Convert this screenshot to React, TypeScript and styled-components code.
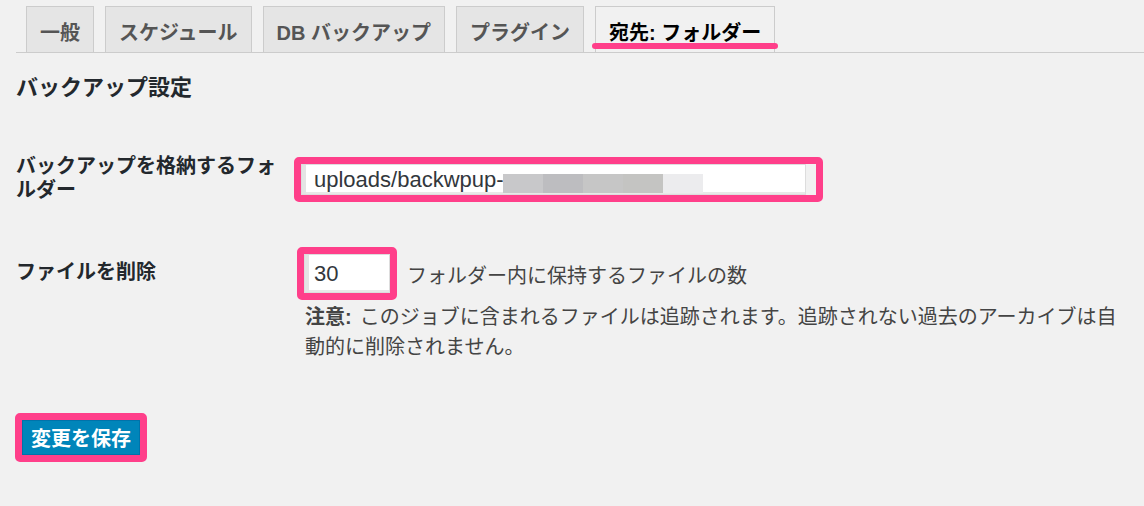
import React from 'react';
import styled, { createGlobalStyle } from 'styled-components';

const PINK = '#ff3f8a';

const tabs = ['一般', 'スケジュール', 'DB バックアップ', 'プラグイン', '宛先: フォルダー'];
const blurBlocks = ['#c8c8ca', '#bdbdc0', '#c6c6c6', '#c4c4c2', '#ececee'];

export default function App() {
  return (
    <>
      <GlobalStyle />
      <Page>
        <TabBar>
          {tabs.map((t, i) => (
            <Tab key={t} $active={i === tabs.length - 1}>
              {t}
              {i === tabs.length - 1 && <Underline />}
            </Tab>
          ))}
        </TabBar>

        <Title>バックアップ設定</Title>

        <FormRow $top={51}>
          <Label $pad={0}>バックアップを格納するフォルダー</Label>
          <Field $pad={3}>
            <Highlight $extra={10}>
              <FieldWrap>
                <TextInput $w={505} $h={31} $indent={12} defaultValue="uploads/backwpup-" />
                <Redaction>
                  {blurBlocks.map((c, i) => (
                    <BlurBlock key={i} $color={c} />
                  ))}
                </Redaction>
              </FieldWrap>
            </Highlight>
          </Field>
        </FormRow>

        <FormRow $top={45}>
          <Label $pad={13}>ファイルを削除</Label>
          <Field $pad={0}>
            <InlineLine>
              <Highlight $extra={0}>
                <TextInput $w={86} $h={39} $indent={9} defaultValue="30" />
              </Highlight>
              <Description>フォルダー内に保持するファイルの数</Description>
            </InlineLine>
            <Note>
              <NoteLabel>注意:</NoteLabel>このジョブに含まれるファイルは追跡されます。追跡されない過去のアーカイブは自動的に削除されません。
            </Note>
          </Field>
        </FormRow>

        <Submit>
          <Highlight $extra={0}>
            <SaveButton type="button">変更を保存</SaveButton>
          </Highlight>
        </Submit>
      </Page>
    </>
  );
}

const GlobalStyle = createGlobalStyle`
  html, body {
    margin: 0;
    background: #f1f1f1;
  }
  body {
    font-family: "Liberation Sans", "Noto Sans CJK JP", sans-serif;
    color: #444;
  }
`;

const Page = styled.div`
  padding-left: 16px;
  min-height: 506px;
  box-sizing: border-box;
`;

const TabBar = styled.nav`
  display: flex;
  align-items: flex-end;
  padding: 6px 0 0 10px;
  border-bottom: 1px solid #ccc;
`;

const Tab = styled.div<{ $active: boolean }>`
  position: relative;
  box-sizing: border-box;
  height: 46px;
  display: flex;
  align-items: center;
  padding: 3px 13px 0;
  margin-right: 11px;
  border: 1px solid #ccc;
  border-bottom: none;
  background: ${({ $active }) => ($active ? '#f1f1f1' : '#e5e5e5')};
  color: ${({ $active }) => ($active ? '#000' : '#555')};
  font-size: 20px;
  font-weight: 700;
  white-space: nowrap;
`;

const Underline = styled.span`
  position: absolute;
  left: -4px;
  right: -4px;
  bottom: 3px;
  height: 6px;
  border-radius: 3px;
  background: ${PINK};
`;

const Title = styled.h2`
  margin: 20px 0 0;
  font-size: 22px;
  line-height: 30px;
  font-weight: 700;
  color: #23282d;
`;

const FormRow = styled.div<{ $top: number }>`
  display: grid;
  grid-template-columns: 278px 1fr;
  margin-top: ${({ $top }) => $top}px;
  align-items: start;
`;

const Label = styled.div<{ $pad: number }>`
  padding-top: ${({ $pad }) => $pad}px;
  padding-right: 6px;
  font-size: 20px;
  line-height: 24px;
  font-weight: 700;
  color: #23282d;
`;

const Field = styled.div<{ $pad: number }>`
  padding-top: ${({ $pad }) => $pad}px;
`;

const Highlight = styled.div<{ $extra: number }>`
  display: inline-flex;
  border: 7px solid ${PINK};
  border-radius: 5px;
  padding-right: ${({ $extra }) => $extra}px;
`;

const FieldWrap = styled.div`
  position: relative;
  display: flex;
`;

const TextInput = styled.input<{ $w: number; $h: number; $indent: number }>`
  box-sizing: border-box;
  width: ${({ $w }) => $w}px;
  height: ${({ $h }) => $h}px;
  margin: 0;
  padding: 0 0 0 ${({ $indent }) => $indent}px;
  border: 1px solid #ddd;
  box-shadow: inset 4px 0 0 #e4e4e4, inset 0 -2px 0 #e8e8e8;
  background: #fff;
  font-family: "Liberation Sans", "Noto Sans CJK JP", sans-serif;
  font-size: 22px;
  color: #32373c;
  outline: none;
`;

const Redaction = styled.div`
  position: absolute;
  left: 202px;
  top: 10px;
  display: flex;
`;

const BlurBlock = styled.span<{ $color: string }>`
  width: 40px;
  height: 19px;
  background: ${({ $color }) => $color};
`;

const InlineLine = styled.div`
  display: flex;
  align-items: center;
  gap: 10px;
  padding-left: 3px;
`;

const Description = styled.span`
  font-size: 20px;
  line-height: 24px;
  padding-top: 4px;
  color: #444;
`;

const Note = styled.p`
  margin: 2px 0 0;
  padding-left: 11px;
  max-width: 815px;
  font-size: 20px;
  line-height: 30px;
  color: #444;
`;

const NoteLabel = styled.span`
  font-weight: 700;
  margin-right: 8px;
`;

const Submit = styled.div`
  margin: 51px 0 0 -1px;
`;

const SaveButton = styled.button`
  box-sizing: border-box;
  height: 35px;
  margin: 0;
  padding: 0 8px;
  border: 1px solid #0073aa;
  border-radius: 0;
  background: #0085ba;
  color: #fff;
  font-family: "Liberation Sans", "Noto Sans CJK JP", sans-serif;
  font-size: 20px;
  font-weight: 700;
  cursor: pointer;
`;
